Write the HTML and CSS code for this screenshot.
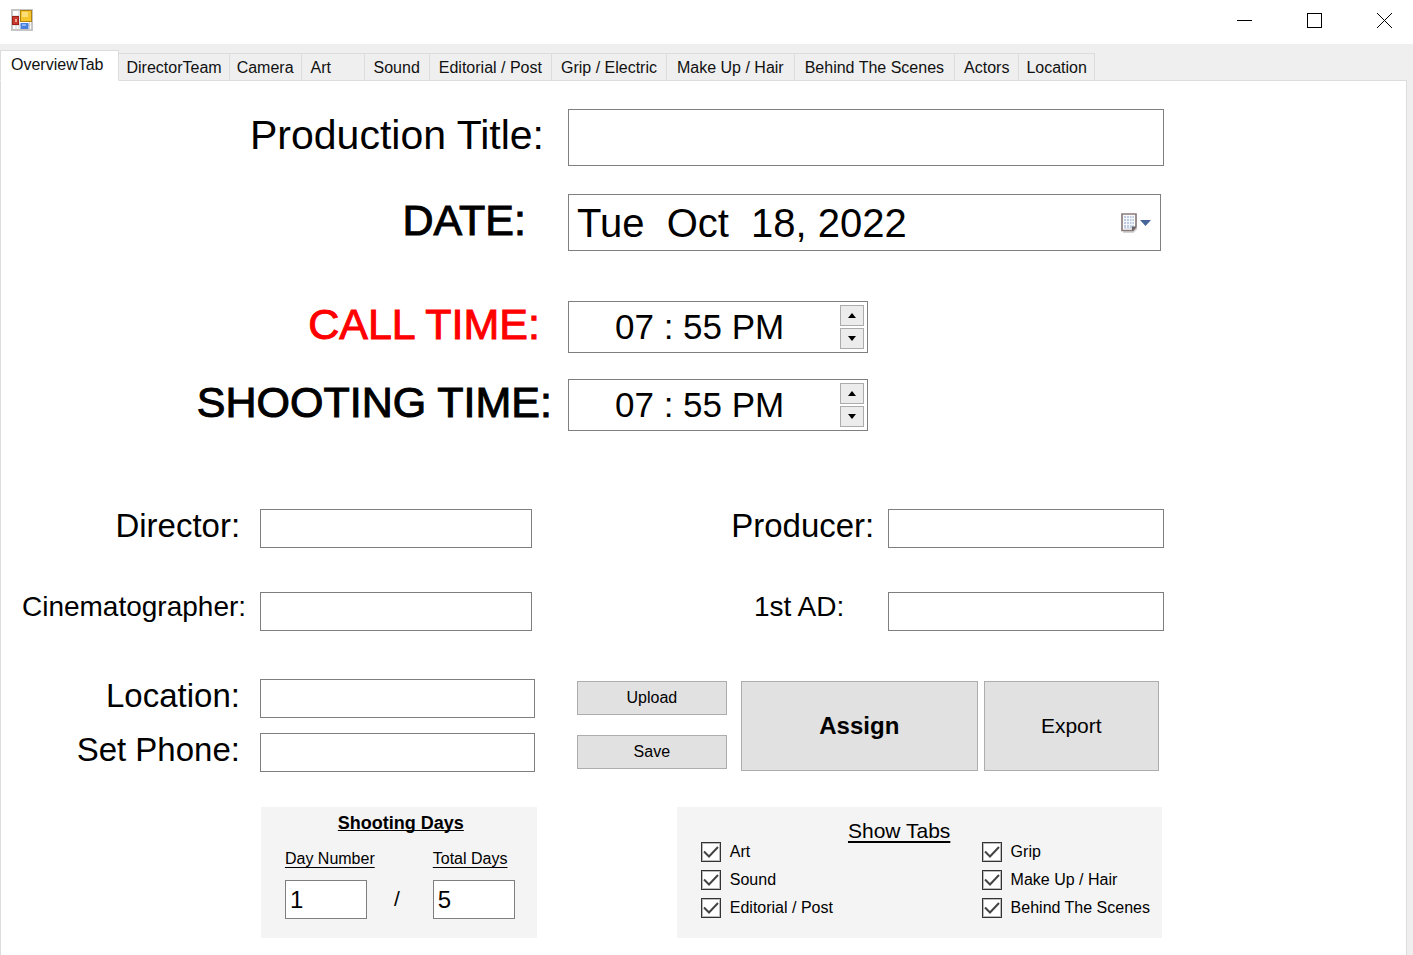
FILE: index.html
```html
<!DOCTYPE html>
<html lang="en">
<head>
<meta charset="utf-8">
<meta name="viewport" content="width=device-width, initial-scale=1">
<title>Call sheet</title>
<link rel="stylesheet" href="styles.css">
</head>
<body class="window">
<header class="titlebar">
  <svg class="app-icon" viewBox="0 0 22 22" width="22" height="22" aria-hidden="true">
    <rect x="1" y="1" width="20" height="20" fill="#fff" stroke="#c4c4c4" stroke-width="2"/>
    <path d="M8 1v20M1 7h7M1 16h20M18.500 13v8M5 16v5" stroke="#cfcfcf" fill="none"/>
    <rect x="1.500" y="7.500" width="6" height="8" fill="#c8382b" stroke="#9c2118"/>
    <rect x="4" y="10" width="2" height="3" fill="#efa79c"/>
    <rect x="9.500" y="1.500" width="11" height="11" fill="#f6c62f" stroke="#b18412"/>
    <rect x="11" y="3" width="6" height="5" fill="#fddf7a"/>
    <rect x="9.500" y="14" width="8" height="6" fill="#4a80dd"/>
    <rect x="11" y="15" width="4" height="2" fill="#8db4f5"/>
  </svg>
  <div class="window-buttons">
    <button class="window-button" type="button" aria-label="Minimize"><svg width="15" height="15" viewBox="0 0 15 15"><path d="M0 7.500h15" stroke="#000" shape-rendering="crispEdges"/></svg></button>
    <button class="window-button" type="button" aria-label="Maximize"><svg width="15" height="15" viewBox="0 0 15 15"><path d="M.5.5h14v14H.5z" fill="none" stroke="#000" shape-rendering="crispEdges"/></svg></button>
    <button class="window-button" type="button" aria-label="Close"><svg width="15" height="15" viewBox="0 0 15 15"><path d="M0 0l15 15M15 0L0 15" stroke="#000"/></svg></button>
  </div>
</header>
<main class="client">
  <div class="tabs" role="tablist">
    <button class="tab tab-active" type="button" role="tab" aria-selected="true">OverviewTab</button>
    <button class="tab tab-tight" type="button" role="tab">DirectorTeam</button>
    <button class="tab tab-tight" type="button" role="tab">Camera</button>
    <button class="tab" type="button" role="tab">Art</button>
    <button class="tab" type="button" role="tab">Sound</button>
    <button class="tab" type="button" role="tab">Editorial / Post</button>
    <button class="tab" type="button" role="tab">Grip / Electric</button>
    <button class="tab tab-wide" type="button" role="tab">Make Up / Hair</button>
    <button class="tab tab-wide" type="button" role="tab">Behind The Scenes</button>
    <button class="tab" type="button" role="tab">Actors</button>
    <button class="tab tab-tight" type="button" role="tab">Location</button>
  </div>
  <form class="panel" role="tabpanel">
    <div class="headline">
      <label class="label label-title" for="title">Production Title:</label>
      <input class="box box-large" id="title" type="text">

      <label class="label label-strong label-date" for="date">DATE:</label>
      <div class="box box-large date-box">
        <input class="date-value" id="date" type="text" value="Tue  Oct  18, 2022">
        <button class="date-drop" type="button" aria-label="Open calendar">
          <svg width="32" height="22" viewBox="0 0 32 22">
            <path d="M3 20h10l4-4" stroke="#d4d4d4" stroke-width="2" fill="none"/>
            <path d="M2 2h14v13l-3 3.500H2z" fill="#fbfbfd" stroke="#8a7b7b" stroke-width="1.700"/>
            <path d="M4 4h10v9l-2 3.500H4z" fill="#bfcbe0"/>
            <path d="M4 6.500h10M4 9.500h10M4 12.500h10M6.500 4v12M9.500 4v12M12 4v10" stroke="#f2f5fa" fill="none"/>
            <path d="M12 19v-4.500H16.500z" fill="#6a6264"/>
            <path d="M20 8h11L25.500 14z" fill="#46659a"/>
          </svg>
        </button>
      </div>
    </div>

    <div class="headline headline-times">
      <label class="label label-strong label-call" for="call">CALL TIME:</label>
      <div class="box time-box">
        <input class="time-value" id="call" type="text" value="07 : 55 PM">
        <div class="spinner">
          <button class="spin" type="button" aria-label="Call time later"><svg width="8" height="5" viewBox="0 0 8 5"><path d="M4 0l4 5H0z"/></svg></button>
          <button class="spin" type="button" aria-label="Call time earlier"><svg width="8" height="5" viewBox="0 0 8 5"><path d="M0 0h8L4 5z"/></svg></button>
        </div>
      </div>
      <label class="label label-strong label-shooting" for="shooting">SHOOTING TIME:</label>
      <div class="box time-box">
        <input class="time-value" id="shooting" type="text" value="07 : 55 PM">
        <div class="spinner">
          <button class="spin" type="button" aria-label="Shooting time later"><svg width="8" height="5" viewBox="0 0 8 5"><path d="M4 0l4 5H0z"/></svg></button>
          <button class="spin" type="button" aria-label="Shooting time earlier"><svg width="8" height="5" viewBox="0 0 8 5"><path d="M0 0h8L4 5z"/></svg></button>
        </div>
      </div>
    </div>

    <div class="crew">
      <label class="label label-field" for="director">Director:</label>
      <input class="box" id="director" type="text">
      <label class="label label-field label-near" for="producer">Producer:</label>
      <input class="box" id="producer" type="text">
      <label class="label label-small label-near" for="dp">Cinematographer:</label>
      <input class="box" id="dp" type="text">
      <label class="label label-small label-far" for="ad">1st AD:</label>
      <input class="box" id="ad" type="text">
    </div>

    <div class="site">
      <div class="site-fields">
        <label class="label label-field" for="location">Location:</label>
        <input class="box" id="location" type="text">
        <label class="label label-field" for="phone">Set Phone:</label>
        <input class="box" id="phone" type="text">
      </div>
      <div class="actions">
        <div class="action-stack">
          <button class="action" type="button">Upload</button>
          <button class="action" type="button">Save</button>
        </div>
        <button class="action action-assign" type="button">Assign</button>
        <button class="action action-export" type="button">Export</button>
      </div>
    </div>

    <div class="groups">
      <section class="group days">
        <h2 class="days-heading">Shooting Days</h2>
        <div class="days-row">
          <div class="day">
            <label class="day-label" for="day">Day Number</label>
            <input class="box day-box" id="day" type="text" value="1">
          </div>
          <span class="slash">/</span>
          <div class="day">
            <label class="day-label" for="total">Total Days</label>
            <input class="box day-box" id="total" type="text" value="5">
          </div>
        </div>
      </section>
      <section class="group shown">
        <h2 class="shown-heading">Show Tabs</h2>
        <div class="checks">
          <label class="check"><input class="tick" type="checkbox" checked>Art</label>
          <label class="check"><input class="tick" type="checkbox" checked>Grip</label>
          <label class="check"><input class="tick" type="checkbox" checked>Sound</label>
          <label class="check"><input class="tick" type="checkbox" checked>Make Up / Hair</label>
          <label class="check"><input class="tick" type="checkbox" checked>Editorial / Post</label>
          <label class="check"><input class="tick" type="checkbox" checked>Behind The Scenes</label>
        </div>
      </section>
    </div>
  </form>
</main>
</body>
</html>
```

FILE: styles.css
```css
* {
  box-sizing: border-box;
}

.window {
  display: flex;
  flex-direction: column;
  min-height: 100vh;
  margin: 0;
  background: #fff;
  color: #000;
  font: 16px/20px "Liberation Sans", Arial, sans-serif;
}

button,
input {
  margin: 0;
  font: inherit;
  color: inherit;
}

/* Title bar */
.titlebar {
  display: flex;
  justify-content: space-between;
  align-items: center;
  padding: 0 21px 4px 11px;
  height: 44px;
}

.app-icon {
  display: block;
}

.window-buttons {
  display: flex;
  gap: 55px;
}

.window-button {
  display: flex;
  padding: 0;
  border: 0;
  background: none;
}

/* Tabs */
.client {
  flex: 1;
  display: flex;
  flex-direction: column;
  padding: 6px 6px 0 0;
  background: #efefef;
}

.tabs {
  display: flex;
  align-items: flex-end;
}

.tab {
  height: 28px;
  min-width: 64px;
  margin: 0 0 -1px -1px;
  padding: 2px 9px 0;
  border: 1px solid #dcdcdc;
  background: #efefef;
  color: #111;
  text-align: left;
  white-space: nowrap;
}

.tab-tight {
  padding: 2px 7px 0;
}

.tab-wide {
  padding: 2px 10px 0;
}

.tab-active {
  z-index: 1;
  height: 31px;
  margin-left: 0;
  padding: 0 15px 2px 10px;
  border-bottom-color: #fff;
  background: #fff;
}

.panel {
  flex: 1;
  padding: 28px 0 16px;
  border: 1px solid #dcdcdc;
  border-width: 1px 1px 0 1px;
  background: #fff;
}

/* Fields */
.box {
  width: 100%;
  min-width: 0;
  height: 39px;
  padding: 0 4px;
  border: 1px solid #7f7f7f;
  background: #fff;
}

.box-large {
  height: 57px;
}

.label {
  padding: 0 20px 6px 0;
  text-align: right;
  white-space: nowrap;
}

.headline {
  display: grid;
  grid-template-columns: 567fr 596fr 242fr;
  row-gap: 28px;
  align-items: center;
}

.headline > .label {
  grid-column: 1;
}

.label-title {
  padding-right: 24px;
  font-size: 41px;
  line-height: 48px;
}

.label-strong {
  font-size: 43px;
  line-height: 44px;
  -webkit-text-stroke: 1px currentColor;
}

.label-date {
  padding-right: 42px;
}

.label-call {
  padding-right: 28px;
  color: #f00;
}

.label-shooting {
  padding-right: 16px;
}

.date-box {
  display: flex;
  align-items: center;
  width: auto;
  margin-right: 3px;
  padding: 0 8px;
}

.date-value {
  flex: 1;
  min-width: 0;
  padding: 2px 0 0;
  border: 0;
  background: none;
  font-size: 40px;
}

.date-drop {
  display: flex;
  padding: 0;
  border: 0;
  background: none;
}

.headline-times {
  row-gap: 26px;
  margin-top: 50px;
}

.time-box {
  display: flex;
  width: 300px;
  height: 52px;
  padding: 3px;
}

.time-value {
  flex: 1;
  min-width: 0;
  padding: 0 0 0 43px;
  border: 0;
  background: none;
  font-size: 35px;
}

.spinner {
  display: flex;
  flex-direction: column;
  gap: 2px;
}

.spin {
  flex: 1;
  display: flex;
  align-items: center;
  justify-content: center;
  width: 24px;
  padding: 0;
  border: 1px solid #acacac;
  background: #ececec;
}

/* Crew */
.crew {
  display: grid;
  grid-template-columns: 259fr 272fr 356fr 276fr;
  row-gap: 44px;
  align-items: center;
  margin: 78px 17.2% 0 0;
}

.label-field {
  font-size: 33px;
  line-height: 33px;
}

.label-small {
  padding-bottom: 10px;
  font-size: 28px;
  line-height: 29px;
}

.label-near {
  padding-right: 14px;
}

.label-far {
  padding-right: 44px;
}

/* Location and actions */
.site {
  display: grid;
  grid-template-columns: 534fr 582fr;
  column-gap: 42px;
  margin: 48px 17.6% 0 0;
}

.site-fields {
  display: grid;
  grid-template-columns: 259fr 275fr;
  row-gap: 15px;
  align-items: center;
}

.actions {
  display: grid;
  grid-template-columns: 158fr 237fr 175fr;
  column-gap: 6px;
  padding: 2px 0 1px;
}

.action-stack {
  display: flex;
  flex-direction: column;
  gap: 20px;
  padding-right: 8px;
}

.action {
  padding: 0;
  border: 1px solid #adadad;
  background: #e1e1e1;
}

.action-stack .action {
  height: 34px;
}

.action-assign {
  font-size: 24px;
  font-weight: 700;
}

.action-export {
  font-size: 21px;
}

/* Groups */
.groups {
  display: grid;
  grid-template-columns: 276fr 485fr;
  column-gap: 140px;
  margin: 35px 17.4% 0 18.5%;
}

.group {
  min-height: 131px;
  background: #f4f4f4;
}

.days-heading {
  margin: 0;
  padding: 6px 0 0 4px;
  font-size: 18px;
  line-height: 20px;
  text-align: center;
  text-decoration: underline;
  text-decoration-skip-ink: none;
}

.days-row {
  display: flex;
  justify-content: space-between;
  align-items: flex-end;
  padding: 16px 22px 0 24px;
}

.day {
  display: flex;
  flex-direction: column;
  gap: 11px;
  width: 82px;
}

.day-label {
  white-space: nowrap;
  text-decoration: underline;
  text-decoration-skip-ink: none;
  text-underline-offset: 3px;
}

.day-box {
  font-size: 24px;
}

.slash {
  padding-right: 6px;
  font-size: 21px;
  line-height: 40px;
}

.shown {
  padding: 17px 0 12px 24px;
}

.shown-heading {
  margin: 0;
  padding-right: 64px;
  font-size: 21px;
  font-weight: 400;
  line-height: 14px;
  text-align: center;
  text-decoration: underline;
  text-underline-offset: 3px;
}

.checks {
  display: grid;
  grid-template-columns: 281fr 180fr;
  grid-auto-rows: 28px;
}

.check {
  display: flex;
  align-items: center;
  gap: 9px;
  white-space: nowrap;
}

.tick {
  appearance: none;
  flex: none;
  width: 20px;
  height: 20px;
  border: 1px solid #333;
  outline: 1px solid #bbb;
  outline-offset: -2px;
  background: #fff url("data:image/svg+xml,%3Csvg xmlns='http://www.w3.org/2000/svg' viewBox='0 0 18 18'%3E%3Cpath d='M2 8.500l5 5L16 4' fill='none' stroke='%23444' stroke-width='2'/%3E%3C/svg%3E") center / 18px 18px no-repeat;
}
```
